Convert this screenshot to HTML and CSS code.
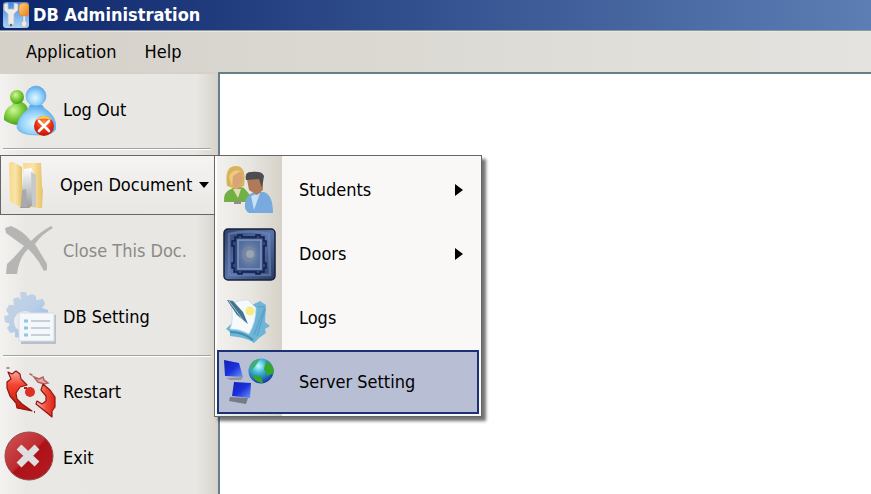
FILE: index.html
```html
<!DOCTYPE html>
<html lang="en">
<head>
<meta charset="utf-8">
<title>DB Administration</title>
<link rel="stylesheet" href="styles.css">
</head>
<body>
<div class="window">
  <header class="titlebar">
    <svg class="app-icon" viewBox="0 0 26 26" aria-hidden="true">
      <defs>
        <linearGradient id="appBg" x1="0" y1="0" x2="0" y2="1"><stop offset="0" stop-color="#3f86e4"/><stop offset="1" stop-color="#a9d6fa"/></linearGradient>
        <linearGradient id="amber" x1="0" y1="0" x2="1" y2="1"><stop offset="0" stop-color="#ffd27a"/><stop offset="1" stop-color="#ee7d0c"/></linearGradient>
      </defs>
      <rect width="26" height="26" rx="3" fill="url(#appBg)"/>
      <path d="M1 2v6l4 4v10q3 5 6 0V12l4-4V2l-4-1v6H5V1z" fill="#edebe8" stroke="#b4bac4" stroke-width=".8"/>
      <circle cx="8" cy="23" r="1.300" fill="#666"/>
      <rect x="16" y="1" width="10" height="13" rx="4" fill="url(#amber)" stroke="#d9822b" stroke-width=".6"/>
      <path d="M20 14h2.400v5l1.600 2-1 4h-4l-1-4 2-2z" fill="#eceae6" stroke="#a9a9a9" stroke-width=".6"/>
    </svg>
    <h1 class="title">DB Administration</h1>
  </header>
  <nav class="menubar">
    <button class="menu-button" type="button">Application</button>
    <button class="menu-button" type="button">Help</button>
  </nav>
  <div class="workspace">
    <aside class="sidebar">
      <button class="tool" type="button">
        <svg class="tool-icon" viewBox="0 0 54 54" aria-hidden="true">
          <defs>
            <radialGradient id="green" cx=".4" cy=".35" r=".7"><stop offset="0" stop-color="#d4f5a0"/><stop offset=".5" stop-color="#7fcf3c"/><stop offset="1" stop-color="#3d9a18"/></radialGradient>
            <radialGradient id="blue" cx=".45" cy=".6" r=".65"><stop offset="0" stop-color="#e2f7ff"/><stop offset=".5" stop-color="#9ad5fb"/><stop offset="1" stop-color="#4a9fe6"/></radialGradient>
            <radialGradient id="red" cx=".5" cy=".3" r=".7"><stop offset="0" stop-color="#ff8a4a"/><stop offset=".6" stop-color="#e92c10"/><stop offset="1" stop-color="#b91408"/></radialGradient>
          </defs>
          <path d="M2 33q1-8 8-11l1-3h9q6 3 6 9l-9 14q-8 0-15-5z" fill="url(#green)"/>
          <circle cx="15" cy="14" r="7" fill="url(#green)"/>
          <path d="M28 22h12q2 4 6 6 8 7 8 16 0 8-18 8-20 0-21-8 1-10 9-16 3-2 4-6z" fill="url(#blue)" stroke="#6fb6ea" stroke-width=".8"/>
          <circle cx="34" cy="13" r="10" fill="url(#blue)" stroke="#5daaea" stroke-width=".6"/>
          <circle cx="42" cy="43" r="10" fill="url(#red)"/>
          <path d="M34 37q8-8 16 0-8-3-16 0z" fill="#ffcf3c"/>
          <path d="M37 38l10 10M47 38L37 48" stroke="#fff" stroke-width="2.600" stroke-linecap="round"/>
        </svg>
        <span>Log Out</span>
      </button>
      <hr class="rule">
      <div class="dropdown">
        <button class="tool tool-open" type="button" aria-haspopup="menu" aria-expanded="true">
          <svg class="tool-icon" viewBox="0 0 54 54" aria-hidden="true">
            <defs>
              <linearGradient id="folder" x1="0" y1="0" x2="1" y2="0"><stop offset="0" stop-color="#f7d98c"/><stop offset=".5" stop-color="#f9e4a8"/><stop offset="1" stop-color="#e6c067"/></linearGradient>
              <linearGradient id="paper" x1="0" y1="0" x2="0" y2="1"><stop offset="0" stop-color="#fff"/><stop offset="1" stop-color="#9a9c9f"/></linearGradient>
            </defs>
            <path d="M20 5h18l1 24 1 3-1 18H24z" fill="url(#folder)"/>
            <path d="M17 50l4-39 8-1 1 6v31l-4 3z" fill="url(#paper)"/>
            <path d="M28 14l5 3v32h-4z" fill="#c7c8c9"/>
            <path d="M6 6q1-3 4-2l9 5v21l-1 19-9-4-2-2z" fill="url(#folder)"/>
            <path d="M19 32l4-1 2 18h-7z" fill="#a9aaab"/>
          </svg>
          <span>Open Document</span>
          <svg class="caret" viewBox="0 0 10 6" aria-hidden="true"><path d="M0 0h10L5 6z"/></svg>
        </button>
        <div class="menu" role="menu">
          <button class="menu-item" type="button" role="menuitem">
            <svg class="menu-icon" viewBox="0 0 56 56" aria-hidden="true">
              <path d="M3 40q-1-10 7-13l6-3 7 2 6 7-3 7z" fill="#72b043"/>
              <path d="M12 27l5 9 3-9z" fill="#e8d9b8"/>
              <path d="M6 24Q3 4 15 4q11 0 8 20l-8 3z" fill="#d9b25c"/>
              <ellipse cx="16" cy="17" rx="5" ry="9" fill="#d9a477"/>
              <path d="M8 15q3-9 12-6l-8 5-1 11z" fill="#eccb7d"/>
              <path d="M13 39h7v3h-7z" fill="#938e86"/>
              <path d="M28 51q-5-3-4-9 1-10 10-12h9q9 3 9 21z" fill="#78aae0"/>
              <path d="M30 34l3 14 6-17z" fill="#c9e0f5"/>
              <path d="M25 12q4-4 16-1l1 17-6 5-8-5z" fill="#ae7b56"/>
              <path d="M25 18q-2-8 6-8 10-1 12 4l-2 12-3-9z" fill="#4b4d50"/>
            </svg>
            <span>Students</span>
            <svg class="arrow" viewBox="0 0 8 12" aria-hidden="true"><path d="M0 0l8 6-8 6z"/></svg>
          </button>
          <button class="menu-item" type="button" role="menuitem">
            <svg class="menu-icon" viewBox="0 0 56 56" aria-hidden="true">
              <defs>
                <radialGradient id="door"><stop offset="0" stop-color="#8292ad"/><stop offset="1" stop-color="#536d9e"/></radialGradient>
                <linearGradient id="frame" x1="0" y1="0" x2="1" y2="1"><stop offset="0" stop-color="#304068"/><stop offset=".5" stop-color="#5874aa"/><stop offset="1" stop-color="#273961"/></linearGradient>
              </defs>
              <rect x="3" y="3" width="51" height="51" rx="4" fill="url(#frame)" stroke="#18213a" stroke-width="1.500"/>
              <path d="M8 8q20-5 40 0l1 41H8z" fill="none" stroke="#6e87b7" stroke-width="2.500" opacity=".6"/>
              <path d="M14 11h3v-2h4v2h14v-2h4v2h4v4h2v5h-2v17h2v5h-2v4h-4v2h-4v-2H21v2h-4v-2h-4v-4h-2v-5h2V20h-2v-5h3z" fill="#33487a" stroke="#111f4d" stroke-width="1.500"/>
              <rect x="17" y="14" width="23" height="29" fill="url(#door)" stroke="#8399c1" stroke-width="1.500"/>
              <path d="M21 29q1-9 7-9 7 1 7 8-2 9-8 8-5-1-6-7z" fill="#77869f"/>
              <circle cx="29" cy="28" r="4" fill="#98a4b7"/>
            </svg>
            <span>Doors</span>
            <svg class="arrow" viewBox="0 0 8 12" aria-hidden="true"><path d="M0 0l8 6-8 6z"/></svg>
          </button>
          <button class="menu-item" type="button" role="menuitem">
            <svg class="menu-icon" viewBox="0 0 56 56" aria-hidden="true">
              <path d="M9 35l-4 4 4 3v4q12 1 19 4l5 3 5-5 7-5-1-4 5-3-5-4 1-17-6-4-8 4z" fill="#70b5d8"/>
              <path d="M37 17q7-2 7 3l-8 26M33 45l10-26" fill="none" stroke="#5aa5cd" stroke-width="1.500"/>
              <path d="M9 42q13 0 23 8" fill="none" stroke="#3f8fb5" stroke-width="2"/>
              <path d="M10 15q8-6 17-5l8 8q0 14-7 26-9-5-19-5 4-10 1-24z" fill="#f5fafd" stroke="#c2d9e6" stroke-width=".7"/>
              <circle cx="29" cy="21" r="4.500" fill="#f5ec82"/>
              <path d="M6 10l6 1 10 11 5 12-11-9z" fill="#45728f"/>
              <path d="M8 11l14 19" stroke="#9ec3d8" stroke-width="1"/>
            </svg>
            <span>Logs</span>
          </button>
          <button class="menu-item menu-item-active" type="button" role="menuitem">
            <svg class="menu-icon" viewBox="0 0 56 56" aria-hidden="true">
              <defs>
                <linearGradient id="screen" x1="0" y1="0" x2="1" y2="1"><stop offset="0" stop-color="#1420b0"/><stop offset=".5" stop-color="#1a30dc"/><stop offset="1" stop-color="#6b98f4"/></linearGradient>
                <radialGradient id="globe" cx=".4" cy=".3" r=".7"><stop offset="0" stop-color="#c0ffff"/><stop offset=".4" stop-color="#42b7da"/><stop offset="1" stop-color="#153ba6"/></radialGradient>
              </defs>
              <path d="M5 24l17-1-2 3H9z" fill="#9295a1"/>
              <path d="M3 6l15 3 4 14-18-1z" fill="url(#screen)"/>
              <path d="M13 28l17 1-1 15-18-2z" fill="url(#screen)"/>
              <path d="M9 43l18 1-2 6-17-3z" fill="#777b86"/>
              <circle cx="40" cy="17" r="12.500" fill="url(#globe)"/>
              <path d="M29 12q3-7 10-7l-4 6-5 7z" fill="#3fae72"/>
              <path d="M45 7q8 3 8 12l-7 3-3-7zM31 21l9 1 2 7q-7 0-11-8z" fill="#35a72d"/>
            </svg>
            <span>Server Setting</span>
          </button>
        </div>
      </div>
      <button class="tool" type="button" disabled>
        <svg class="tool-icon" viewBox="0 0 54 54" aria-hidden="true">
          <path d="M3 4l6-2q11 4 20 15Q38 8 49 2l2 2Q40 10 33 20l12 20v6l-3 1q-7-14-16-22-9 9-11 25H4l1-10q8-7 17-18L4 9z" fill="#b5b5b4"/>
        </svg>
        <span>Close This Doc.</span>
      </button>
      <button class="tool" type="button">
        <svg class="tool-icon" viewBox="0 0 54 54" aria-hidden="true">
          <defs>
            <linearGradient id="gear" x1="0" y1="0" x2="1" y2="1"><stop offset="0" stop-color="#cbd4df"/><stop offset=".5" stop-color="#b8cfe9"/><stop offset="1" stop-color="#94b6dd"/></linearGradient>
          </defs>
          <path fill-rule="evenodd" d="M18 2h6l1 4 5-2 4 2v4l7-1 2 5-3 4 6 2v8L34 32q-2-11-11-11-11 1-11 11 1 8 7 9v7l-6-1v-5l-5 1-3-5 3-4-5-2-1-6 5-1-3-5 3-5h5l-1-6 5-2 3 3z" fill="url(#gear)"/>
          <path d="M19 25h35v29H19z" fill="#b8bfc8"/>
          <path d="M17 23h35v28H17z" fill="#f5f8fb" stroke="#d3dde8"/>
          <path d="M29 31h19M29 38h19M29 45h19" stroke="#c8ced8" stroke-width="2"/>
          <path d="M22 31h4M22 38h4M22 45h4" stroke="#8dc6df" stroke-width="3"/>
        </svg>
        <span>DB Setting</span>
      </button>
      <hr class="rule">
      <button class="tool" type="button">
        <svg class="tool-icon" viewBox="0 0 54 54" aria-hidden="true">
          <defs>
            <linearGradient id="flame" x1="0" y1="0" x2="0" y2="1"><stop offset="0" stop-color="#f9aaa0"/><stop offset=".35" stop-color="#f5432f"/><stop offset="1" stop-color="#b8140e"/></linearGradient>
            <linearGradient id="ember" x1="0" y1="0" x2="1" y2="0"><stop offset="0" stop-color="#f7c4bd"/><stop offset=".5" stop-color="#f2503f"/><stop offset="1" stop-color="#d92117"/></linearGradient>
          </defs>
          <path d="M10 9L14 6L18 9L19 14L25 20L18 22L14 28L15 34L20 39L30 46L25 45L15 43L14 38L8 31L5 23V17L9 14L6 7z" fill="url(#flame)" stroke="#8e1712" stroke-width="1.200" stroke-linejoin="round"/>
          <path d="M5 3h2M28 9l2 1M32 12l5 2 4-2 1 3 4 3-4 1-6-2z" fill="#eaa9a7" stroke="#b06462" stroke-width="1.500" stroke-linecap="round"/>
          <path d="M41 19L48 25L53 32V42L50 46V52L44 47L34 39L35 36L40 39L44 36V31L39 25z" fill="url(#ember)" stroke="#8e1712" stroke-width="1.200" stroke-linejoin="round"/>
          <circle cx="28" cy="27" r="5" fill="#df2e23"/>
          <path d="M22 23h3M32 47h1" stroke="#a3231e" stroke-width="2"/>
        </svg>
        <span>Restart</span>
      </button>
      <button class="tool" type="button">
        <svg class="tool-icon" viewBox="0 0 54 54" aria-hidden="true">
          <defs>
            <linearGradient id="stop" x1="0" y1="0" x2="1" y2="1"><stop offset="0" stop-color="#cf5658"/><stop offset=".48" stop-color="#bd2b30"/><stop offset=".52" stop-color="#ae1219"/><stop offset="1" stop-color="#b51c20"/></linearGradient>
          </defs>
          <circle cx="27" cy="25" r="24" fill="url(#stop)" stroke="#94494b" stroke-width="1"/>
          <path d="M17 16l18 17M35 16L17 34" stroke="#e0dfdf" stroke-width="7"/>
        </svg>
        <span>Exit</span>
      </button>
    </aside>
    <main class="canvas"></main>
  </div>
</div>
</body>
</html>
```
FILE: styles.css
```css
* {
  box-sizing: border-box;
}

body {
  margin: 0;
  font-family: Tahoma, "DejaVu Sans Condensed", "Noto Sans", sans-serif;
  font-size: 18px;
  line-height: 24px;
  color: #000;
}

button {
  margin: 0;
  padding: 0;
  border: 0;
  background: none;
  font: inherit;
  color: inherit;
  text-align: left;
  white-space: nowrap;
}

svg {
  flex: none;
  display: block;
}

.window {
  display: flex;
  flex-direction: column;
  min-height: 100vh;
  background: #d5d1c9;
}

.titlebar {
  display: flex;
  align-items: center;
  gap: 4px;
  height: 31px;
  padding-left: 3px;
  background: linear-gradient(90deg, #0d266b, #5c7eb4);
  border-bottom: 1px solid #8c96ab;
}

.app-icon {
  width: 26px;
  height: 26px;
}

.title {
  margin: 0;
  font-size: 18px;
  font-weight: bold;
  color: #fff;
}

.menubar {
  display: flex;
  align-items: center;
  gap: 28px;
  height: 41px;
  padding-left: 26px;
  background: linear-gradient(90deg, #d5d1c9, #e4e3df);
  border-top: 1px solid #ece6dc;
}

.workspace {
  display: flex;
  flex: 1;
}

.sidebar {
  flex: none;
  display: flex;
  flex-direction: column;
  width: 218px;
  padding-top: 3px;
  border-top: 2px solid #d5d1c9;
  background: linear-gradient(90deg, #f3f2f0, #e9e8e4 12%, #e8e7e3 90%, #d6d3cb);
}

.tool {
  display: flex;
  align-items: center;
  gap: 7px;
  height: 66px;
  padding-left: 2px;
}

.tool:disabled {
  color: #8b8b89;
}

.tool-icon {
  width: 54px;
  height: 54px;
}

.rule {
  width: 208px;
  height: 2px;
  margin: 5px 0 2px 3px;
  border: 0;
  border-top: 1px solid #a3a3a3;
  background: #fff;
}

.dropdown {
  position: relative;
  margin: 3px 0;
}

.tool-open {
  width: 215px;
  height: 60px;
  gap: 3px;
  border: 1px solid #666;
  background: linear-gradient(#f5f4f3, #e8e7e3);
}

.caret {
  width: 10px;
  height: 6px;
  margin-left: 4px;
}

.menu {
  position: absolute;
  z-index: 1;
  top: 0;
  left: 214px;
  width: 268px;
  padding: 2px;
  border: 1px solid #666;
  background: linear-gradient(90deg, #fff 2px, #f2f1ee 2px, #e7e5e0 36px, #d6d2c9 67px, #f9f8f7 67px);
  box-shadow: 4px 4px 3px rgba(0, 0, 0, 0.55);
}

.menu-item {
  display: flex;
  align-items: center;
  gap: 22px;
  width: 100%;
  height: 64px;
  padding: 0 15px 0 3px;
  border: 1px solid transparent;
}

.menu-item-active {
  border: 2px solid #1b3278;
  padding: 0 14px 0 2px;
  background: #b8bed3;
}

.menu-icon {
  width: 56px;
  height: 56px;
}

.arrow {
  width: 8px;
  height: 12px;
  margin-left: auto;
}

.canvas {
  flex: 1;
  background: #fff;
  border-top: 2px solid #647f8c;
  border-left: 2px solid #647f8c;
}
```
